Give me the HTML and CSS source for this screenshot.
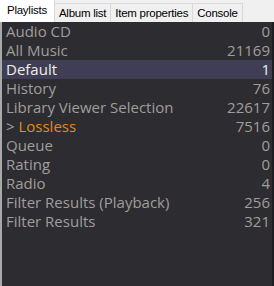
FILE: index.html
```html
<!DOCTYPE html>
<html lang="en">
<head>
    <meta charset="UTF-8">
    <title>Playlists</title>
    <link rel="stylesheet" href="styles.css">
</head>
<body>
    <div class="panel">
        <div class="tabs">
            <div class="tab active">Playlists</div>
            <div class="tab">Album list</div>
            <div class="tab">Item properties</div>
            <div class="tab">Console</div>
        </div>
        <div class="list">
            <div class="row"><span class="name">Audio CD</span><span class="count">0</span></div>
            <div class="row"><span class="name">All Music</span><span class="count">21169</span></div>
            <div class="row selected"><span class="name">Default</span><span class="count">1</span></div>
            <div class="row"><span class="name">History</span><span class="count">76</span></div>
            <div class="row"><span class="name">Library Viewer Selection</span><span class="count">22617</span></div>
            <div class="row playing"><span class="name"><span class="mark">&gt;</span> Lossless</span><span class="count">7516</span></div>
            <div class="row"><span class="name">Queue</span><span class="count">0</span></div>
            <div class="row"><span class="name">Rating</span><span class="count">0</span></div>
            <div class="row"><span class="name">Radio</span><span class="count">4</span></div>
            <div class="row"><span class="name">Filter Results (Playback)</span><span class="count">256</span></div>
            <div class="row"><span class="name">Filter Results</span><span class="count">321</span></div>
        </div>
    </div>
</body>
</html>
```

FILE: styles.css
```css
html, body {
    margin: 0;
    padding: 0;
}
body {
    width: 274px;
    height: 286px;
    overflow: hidden;
    background-color: #f0f0f0;
}
.panel {
    display: flex;
    flex-direction: column;
    height: 100%;
}
.tabs {
    display: flex;
    align-items: flex-end;
    height: 22px;
    flex-shrink: 0;
    font-family: "Liberation Sans", Arial, sans-serif;
    font-size: 11.5px;
    letter-spacing: -0.25px;
    color: #000;
}
.tab {
    height: 19px;
    line-height: 19px;
    padding: 0 4px;
    border: 1px solid #d9d9d9;
    border-bottom: none;
    border-left: none;
    background-color: #f0f0f0;
    box-sizing: border-box;
}
.tab.active {
    height: 22px;
    line-height: 21px;
    padding: 0 7px;
    background-color: #fff;
    border-top: none;
}
.list {
    flex-grow: 1;
    background-color: #2d2c31;
    border-left: 2px solid #a9a9a9;
    border-right: 2px solid #1e1e22;
    font-family: "Open Sans", "Noto Sans", sans-serif;
    font-size: 15px;
    color: #a09e9b;
}
.row {
    display: flex;
    justify-content: space-between;
    height: 19px;
    line-height: 19px;
    padding: 0 2px 0 4px;
    white-space: nowrap;
}
.row.selected {
    background-color: #403e54;
    color: #f0eee8;
}
.row.playing .name {
    color: #e38b1e;
}
.row.playing .mark {
    color: #a09e9b;
}
```
